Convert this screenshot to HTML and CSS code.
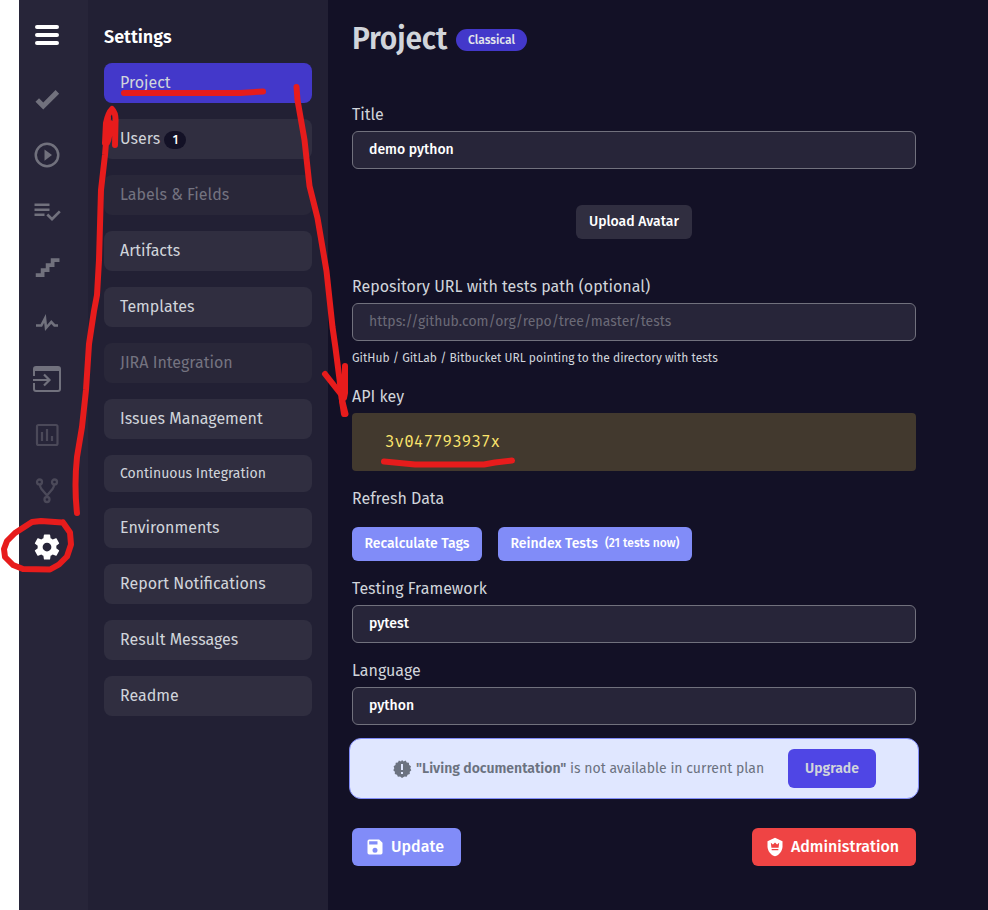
FILE: index.html
```html
<!DOCTYPE html>
<html lang="en">
<head>
<meta charset="utf-8">
<title>Project settings</title>
<link rel="stylesheet" href="styles.css">
</head>
<body>
<div class="app">
  <nav class="rail">
    <a class="rail-item menu"><svg width="28" height="28" viewBox="0 0 28 28"><path d="M4 6h20M4 14h20M4 22h20" fill="none" stroke="currentColor" stroke-width="4" stroke-linecap="round"/></svg></a>
    <a class="rail-item check"><svg width="30" height="30" viewBox="0 0 24 24"><path d="M9 20.42 2.79 14.21l2.83-2.83L9 14.77l9.88-9.89 2.83 2.83z"/></svg></a>
    <a class="rail-item"><svg width="30" height="30" viewBox="0 0 24 24"><path d="M12 20a8 8 0 1 1 0-16 8 8 0 0 1 0 16m0-18a10 10 0 1 0 0 20 10 10 0 0 0 0-20m-2 14.5 6-4.5-6-4.5z"/></svg></a>
    <a class="rail-item"><svg width="30" height="30" viewBox="0 0 24 24"><path d="M14 10H2v2h12zm0-4H2v2h12zM2 16h8v-2H2zm19.5-4.5L23 13l-6.99 7-4.51-4.5L13 14l3.01 3z"/></svg></a>
    <a class="rail-item"><svg width="30" height="30" viewBox="0 0 24 24"><path d="M15 5v4h-4v4H7v4H3v3h7v-4h4v-4h4V8h4V5z"/></svg></a>
    <a class="rail-item"><svg width="28" height="28" viewBox="0 0 28 28"><path d="M3 16.500h5.300L12 9.500l1 9.500 5.300-6 3.200 3.500H25" fill="none" stroke="currentColor" stroke-width="2.600"/></svg></a>
    <a class="rail-item"><svg width="30" height="28" viewBox="0 0 30 28"><path d="M2 11V4q0-2 2-2h22q2 0 2 2v20q0 2-2 2H4q-2 0-2-2v-6" fill="none" stroke="currentColor" stroke-width="2"/><path d="M2 2h26v4H2z"/><path d="M1 15h16M12 9.500l5.500 5.500-5.500 5.500" fill="none" stroke="currentColor" stroke-width="2.200"/></svg></a>
    <a class="rail-item dim"><svg width="28" height="28" viewBox="0 0 28 28"><rect x="4" y="4" width="20.500" height="20" rx="1.500" fill="none" stroke="currentColor" stroke-width="2.200"/><path d="M9 11v9M14 8v12M19 15v5" fill="none" stroke="currentColor" stroke-width="2.200"/></svg></a>
    <a class="rail-item dim"><svg width="28" height="28" viewBox="0 0 28 28"><g fill="none" stroke="currentColor" stroke-width="2.300"><circle cx="6.500" cy="5" r="2.500"/><circle cx="21.500" cy="5" r="2.500"/><circle cx="14" cy="22.500" r="2.500"/><path d="M7 8q0 2 1.500 4L14 18.500 19.500 12Q21 10 21 8M14 18v2"/></g></svg></a>
    <a class="rail-item active"><svg width="30" height="30" viewBox="0 0 24 24"><path d="M12 15.500A3.500 3.500 0 0 1 8.500 12 3.500 3.500 0 0 1 12 8.500a3.500 3.500 0 0 1 3.500 3.500 3.500 3.500 0 0 1-3.500 3.500m7.430-2.530c.04-.32.07-.64.07-.97s-.03-.66-.07-1l2.110-1.630c.19-.15.24-.42.12-.64l-2-3.460c-.12-.22-.39-.31-.61-.22l-2.490 1c-.52-.39-1.060-.73-1.690-.98l-.37-2.650A.506.506 0 0 0 14 2h-4c-.25 0-.46.18-.5.42l-.37 2.650c-.63.25-1.170.59-1.690.98l-2.490-1c-.22-.09-.49 0-.61.22l-2 3.460c-.13.22-.07.49.12.64L4.570 11c-.04.34-.07.67-.07 1s.03.65.07.97l-2.110 1.660c-.19.15-.25.42-.12.64l2 3.460c.12.22.39.3.61.22l2.490-1.010c.52.4 1.060.74 1.690.99l.37 2.650c.04.24.25.42.5.42h4c.25 0 .46-.18.5-.42l.37-2.650c.63-.26 1.170-.59 1.690-.99l2.490 1.010c.22.08.49 0 .61-.22l2-3.460c.12-.22.07-.49-.12-.64z"/></svg></a>
  </nav>

  <aside class="sidebar">
    <h2>Settings</h2>
    <ul>
      <li class="current">Project</li>
      <li>Users <span class="count">1</span></li>
      <li class="disabled">Labels &amp; Fields</li>
      <li>Artifacts</li>
      <li>Templates</li>
      <li class="disabled">JIRA Integration</li>
      <li>Issues Management</li>
      <li class="small">Continuous Integration</li>
      <li>Environments</li>
      <li>Report Notifications</li>
      <li>Result Messages</li>
      <li>Readme</li>
    </ul>
  </aside>

  <main>
    <header><h1>Project</h1><span class="badge">Classical</span></header>
    <label>Title</label>
    <div class="input">demo python</div>
    <div class="avatar"><button class="btn neutral">Upload Avatar</button></div>
    <label class="repo">Repository URL with tests path (optional)</label>
    <div class="input placeholder">https://github.com/org/repo/tree/master/tests</div>
    <p class="hint">GitHub / GitLab / Bitbucket URL pointing to the directory with tests</p>
    <label>API key</label>
    <div class="key">3v047793937x</div>
    <label class="refresh">Refresh Data</label>
    <div class="actions">
      <button class="btn tags">Recalculate Tags</button>
      <button class="btn reindex">Reindex Tests <small>(21 tests now)</small></button>
    </div>
    <label>Testing Framework</label>
    <div class="input">pytest</div>
    <label class="language">Language</label>
    <div class="input">python</div>
    <section class="banner">
      <svg width="20" height="20" viewBox="0 0 20 20"><path fill="#6b7280" d="m10 .9 1.600 1.500 2.100-.8 1 2 2.200.2.200 2.200 1.900 1.200-.7 2.100 1 2-1.600 1.500.1 2.300-2.200.7-.9 2-2.200-.2L10 19l-1.900-1.400-2.200.2-.9-2-2.200-.7.100-2.300-1.600-1.500 1-2-.7-2.100 1.900-1.200.2-2.200 2.200-.2 1-2 2.100.8z"/><path stroke="#e0e7ff" stroke-width="2" d="M10 5v6M10 13v2"/></svg>
      <p><b>"Living documentation"</b> <span>is not available in current plan</span></p>
      <button class="upgrade">Upgrade</button>
    </section>
    <footer>
      <button class="update"><svg width="20" height="20" viewBox="0 0 24 24"><path fill="#fff" d="M15 9H5V5h10m-3 14a3 3 0 0 1-3-3 3 3 0 0 1 3-3 3 3 0 0 1 3 3 3 3 0 0 1-3 3m5-16H5a2 2 0 0 0-2 2v14a2 2 0 0 0 2 2h14a2 2 0 0 0 2-2V7z"/></svg>Update</button>
      <button class="admin"><svg width="20" height="20" viewBox="0 0 24 24"><path fill="#fff" d="M12 1 3 5v6c0 5.550 3.840 10.740 9 12 5.160-1.260 9-6.450 9-12V5z"/><path fill="#ef4444" d="m7 7 2.500 2L12 6.500 14.500 9 17 7l-.7 6H7.700zM8 14.500h8V16H8z"/></svg>Administration</button>
    </footer>
  </main>
</div>
<svg class="ink" width="988" height="910" viewBox="0 0 988 910">
  <path d="M124 93h116l23-1.500"/>
  <path d="M77 513Q74 485 77 457l5-30 4-37 3-46 5-33 3-16 2-35 1-35 1-35 4-35 3-37M105 143l1-20q2-10 6-14 4 4 3.500 13l-.5 23M107 143q3-5 3-20"/>
  <path d="m296.500 87 1 13 7 40 5 46 8 32 9 53 6 56 3 21 4 31 2 19 4 16"/>
  <path d="m325 374 19 24 1-5v-27M344 396l-2 5 2 13"/>
  <path d="m384 461.500 31 3h69l11-2 17-2"/>
  <path d="M62 522.500 41 521l-9 1-17 11-8 8-3 8 1 8 8 8 10 4 27 .500 9-5 8-8 4-12-1-12-7-10"/>
</svg>
</body>
</html>
```
FILE: styles.css
```css
* { box-sizing: border-box; }
body {
  margin: 0;
  background: #fff;
  color: #d1d5db;
  font-family: "Fira Sans", "Noto Sans", "Open Sans", sans-serif;
  font-size: 16px;
  line-height: 24px;
}
.app {
  display: grid;
  grid-template-columns: 69px 240px 1fr;
  height: 910px;
  margin-left: 19px;
  background: #131126;
  overflow: hidden;
}
.rail { background: #272539; padding-top: 7px; }
.rail-item {
  display: flex;
  height: 56px;
  width: 56px;
  align-items: center;
  justify-content: center;
  color: #71717d;
}
.rail-item svg { fill: currentColor; }
.rail-item.menu { color: #fff; margin-bottom: 8px; }
.rail-item.dim { color: #4b4959; }
.rail-item.active { color: #fff; }

.sidebar { background: #222034; padding: 25px 16px; }
h2 { margin: 0 0 14px; font-size: 18px; line-height: 24px; font-weight: 600; color: #fff; }
.sidebar ul {
  list-style: none;
  margin: 0;
  padding: 0;
  display: flex;
  flex-direction: column;
  gap: 16px;
}
.sidebar li {
  height: 40px;
  padding: 8px 16px;
  border-radius: 8px;
  background: #302e40;
}
.sidebar .current { background: #4338ca; }
.sidebar .disabled { background: #292739; color: #747380; }
.sidebar .small { height: 37px; padding-top: 7px; font-size: 14px; }
.count {
  display: inline-block;
  width: 22px;
  height: 18px;
  border-radius: 9px;
  background: #131126;
  color: #fff;
  font-size: 12px;
  font-weight: 500;
  line-height: 18px;
  text-align: center;
  vertical-align: 0;
}

main { padding: 19px 72px 0 24px; }
header { display: flex; align-items: center; height: 40px; margin-bottom: 44px; gap: 8px; }
h1 { margin: 0; width: 96px; font-size: 30px; line-height: 40px; font-weight: 600; letter-spacing: -0.2px; white-space: nowrap; }
.badge {
  width: 71px;
  height: 22px;
  margin-top: 2px;
  border-radius: 11px;
  background: #4338ca;
  color: #e5e7eb;
  font-size: 12px;
  font-weight: 500;
  line-height: 22px;
  text-align: center;
}
label { display: block; height: 28px; white-space: nowrap; }
.input {
  height: 38px;
  padding: 6px 16px;
  line-height: 24px;
  border: 1px solid #71717d;
  border-radius: 6px;
  background: #272539;
  color: #fff;
  font-size: 14px;
  font-weight: 500;
}
.placeholder { color: #6b6a77; font-weight: 400; }
.avatar { display: flex; justify-content: center; margin: 36px 0; }
button {
  display: flex;
  align-items: center;
  justify-content: center;
  margin: 0;
  padding: 0;
  border: 0;
  border-radius: 6px;
  color: #fff;
  font-family: inherit;
  white-space: nowrap;
}
.btn { height: 34px; padding-bottom: 2px; background: #818cf8; font-size: 14px; font-weight: 500; }
.neutral { width: 116px; background: #302e40; }
.hint { margin: 5px 0 15px; font-size: 12px; line-height: 24px; white-space: nowrap; }
.key {
  height: 58px;
  padding: 17px 33px;
  border-radius: 4px;
  background: #42392e;
  color: #fde66d;
  font: 16px/24px "Fira Mono", "DejaVu Sans Mono", monospace;
}
.refresh { margin-top: 16px; height: 40px; }
.actions { display: flex; gap: 16px; margin-bottom: 16px; }
.tags { width: 130px; }
.reindex { width: 194px; gap: 7px; }
.reindex small { font-size: 12px; }
.language { margin-top: 16px; }
.banner {
  display: flex;
  align-items: center;
  height: 61px;
  margin: 13px -3px 29px;
  padding: 0 42px;
  border: 1px solid #818cf8;
  border-radius: 12px;
  background: #e0e7ff;
  color: #6b7280;
  font-size: 14px;
}
.banner p { width: 372px; margin: 0 0 0 4px; white-space: nowrap; }
.banner b { font-weight: 600; }
.upgrade { width: 88px; height: 39px; background: #4f46e5; color: #d1d5db; font-size: 14px; font-weight: 600; }
footer { display: flex; justify-content: space-between; }
footer button { height: 38px; padding: 0 4px 1px 0; gap: 6px; font-size: 16px; font-weight: 500; }
.update { width: 109px; background: #818cf8; }
.admin { width: 164px; background: #ef4444; }
.ink {
  position: absolute;
  top: 0;
  left: 0;
  pointer-events: none;
  fill: none;
  stroke: #e71c1c;
  stroke-width: 6;
  stroke-linecap: round;
  stroke-linejoin: round;
}
```
